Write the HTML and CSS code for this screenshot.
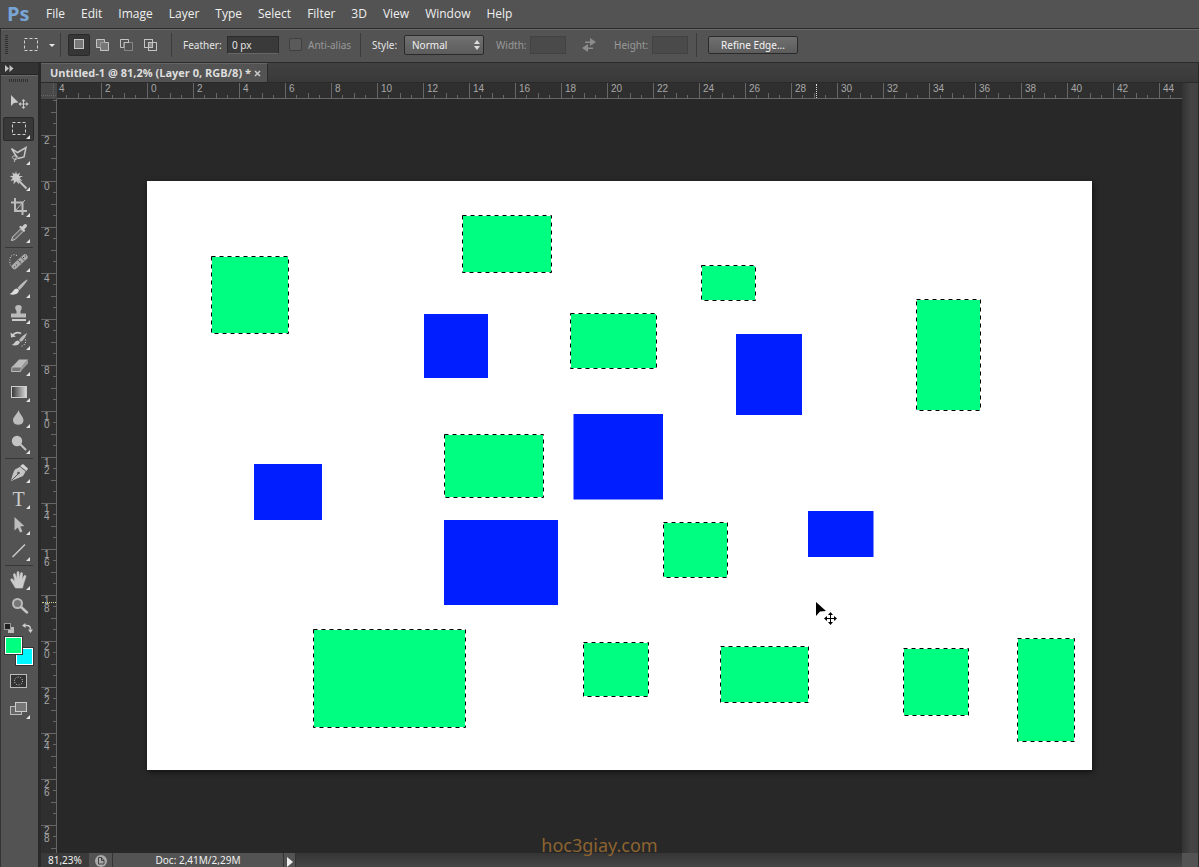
FILE: index.html
```html
<!DOCTYPE html>
<html lang="en">
<head>
<meta charset="utf-8">
<title>Untitled-1</title>
<link rel="stylesheet" href="styles.css">
</head>
<body class="app">
<header class="menubar">
  <span class="logo">Ps</span>
  <nav class="menus">
    <button>File</button><button>Edit</button><button>Image</button><button>Layer</button><button>Type</button><button>Select</button><button>Filter</button><button>3D</button><button>View</button><button>Window</button><button>Help</button>
  </nav>
</header>

<section class="options">
  <span class="opt-grip"></span>
  <button class="opt-tool" aria-label="Marquee presets">
    <svg width="32" height="16" viewBox="0 0 32 16"><rect x="1.500" y="1.500" width="13" height="12" fill="none" stroke="#d0d0d0" stroke-dasharray="3 2"/><path d="M26 7h6l-3 3z" fill="#e8e8e8"/></svg>
  </button>
  <div class="modes">
    <button class="mode mode-on" aria-label="New selection"><svg width="16" height="16" viewBox="0 0 16 16"><rect x="3.500" y="2.500" width="9" height="9" fill="#777" stroke="#c4c4c4"/></svg></button>
    <button class="mode" aria-label="Add to selection"><svg width="16" height="16" viewBox="0 0 16 16"><path d="M1.500 2.500h8v3h4v8h-8v-3h-4z" fill="#777" stroke="#c4c4c4"/><path d="M5.500 9.500v-4h4" fill="none" stroke="#999"/></svg></button>
    <button class="mode" aria-label="Subtract from selection"><svg width="16" height="16" viewBox="0 0 16 16"><rect x="5.500" y="5.500" width="8" height="8" fill="none" stroke="#858585"/><path d="M9.500 5V2.500h-8v8H5V5.500h5" fill="none" stroke="#c4c4c4"/></svg></button>
    <button class="mode" aria-label="Intersect with selection"><svg width="16" height="16" viewBox="0 0 16 16"><rect x="1.500" y="2.500" width="8" height="8" fill="none" stroke="#c4c4c4"/><rect x="5.500" y="5.500" width="8" height="8" fill="none" stroke="#c4c4c4"/><rect x="6" y="6" width="3" height="4" fill="#888"/></svg></button>
  </div>
  <div class="group group-feather"><label class="lab-feather" for="feather">Feather:</label><input class="field" id="feather" type="text" value="0 px"></div>
  <div class="group group-alias"><input class="tick" id="alias" type="checkbox" disabled><label class="dim" for="alias">Anti-alias</label></div>
  <div class="group group-style"><label class="lab-style" for="style">Style:</label>
    <span class="picker"><select id="style"><option>Normal</option></select><svg class="picker-arrows" width="6" height="10" viewBox="0 0 6 10"><path d="M3 0l3 4H0zM3 10l3-4H0z" fill="#ddd"/></svg></span></div>
  <div class="group group-size"><label class="dim lab-width" for="w">Width:</label><input class="field field-off" id="w" type="text" disabled></div>
  <button class="swap" aria-label="Swap width and height"><svg width="16" height="14" viewBox="0 0 16 14"><path d="M4 3.500h5V0l6 4-6 4V5H4zM12 9.500H7V6L1 10l6 4v-3h5z" fill="#8c8c8c"/></svg></button>
  <div class="group group-size"><label class="dim lab-height" for="h">Height:</label><input class="field field-off" id="h" type="text" disabled></div>
  <div class="group group-refine"><button class="refine">Refine Edge...</button></div>
</section>

<main class="workspace">
  <aside class="toolbar">
    <button class="tb-head" aria-label="Expand panel"><svg width="9" height="7" viewBox="0 0 9 7"><path d="M0 0l4 3.500L0 7zM4.500 0l4 3.500-4 3.500z" fill="#c4c4c4"/></svg></button>
    <div class="tb-body">
      <span class="tb-grip"></span>
      <button class="tool tool-plain" aria-label="Move"><svg viewBox="0 0 22 22"><path d="M3 3v11l3-3 4.500-.5z" fill="#ccc"/><path d="M15.500 8v8M11.500 12h8" stroke="#ccc"/><path d="M15.500 7l2 2.200h-4zM15.500 17l2-2.200h-4zM10.500 12l2.200-2v4zM20.500 12l-2.200-2v4z" fill="#ccc"/></svg></button>
      <button class="tool tool-on" aria-label="Rectangular marquee"><svg viewBox="0 0 22 22"><rect x="4.500" y="4.500" width="13" height="12" fill="none" stroke="#d0d0d0" stroke-dasharray="3 2"/></svg></button>
      <button class="tool" aria-label="Polygonal lasso"><svg viewBox="0 0 22 22"><path d="M8.500 12.500L3.500 4.500l6 4 8.500-5-2 9.500-6 1.500" fill="none" stroke="#c8c8c8" stroke-width="1.500"/><path d="M9 12c-5-1-6 2-3 3s5-1 3-3l-3 6" fill="none" stroke="#c8c8c8"/></svg></button>
      <button class="tool" aria-label="Magic wand"><svg viewBox="0 0 22 22"><path d="M8 1l1 3.500 3-2-1 3.500 4 0-3.500 2 3 3-3.800-.7.3 4-2.700-3-2.800 3 .3-4-3.500.5 2.500-2.800-3.200-2 3.700-.3-1.200-3.300 3 1.600z" fill="#ccc"/><path d="M10 10l8.500 8.500" stroke="#c4c4c4" stroke-width="2"/></svg></button>
      <button class="tool" aria-label="Crop"><svg viewBox="0 0 22 22"><path d="M7 2v13h12M3 6.500h11.500V19" fill="none" stroke="#bcbcbc" stroke-width="2"/><path d="M8 14L17 4" stroke="#bcbcbc"/></svg></button>
      <button class="tool" aria-label="Eyedropper"><svg viewBox="0 0 22 22"><path d="M3.500 18.500l1-3.500 8-8 2.500 2.500-8 8z" fill="#666" stroke="#ccc"/><path d="M11 5l1.500-1.200 1.500 1L16 2.500c2-1.500 4 .5 2.500 2.500l-2.200 2.200 1 1.500L16 10z" fill="#ccc"/></svg></button>
      <span class="tb-sep"></span>
      <button class="tool" aria-label="Spot healing brush"><svg viewBox="0 0 22 22"><path d="M9 4.500C4 2 1 6 2 12c.5 4 3 5 5 3" fill="none" stroke="#d8d8d8" stroke-dasharray="1 1.500"/><path d="M6.500 15.500L17 6" stroke="#aaa" stroke-width="5.500" stroke-linecap="round"/><path d="M9.500 8.500l4.500 5M13 6l4 4.500" stroke="#666"/><path d="M6 16h1M8 14h1M15 6.500h1M17 5h1M11.500 10.500h1" stroke="#444"/></svg></button>
      <button class="tool" aria-label="Brush"><svg viewBox="0 0 22 22"><path d="M19 2.500C15 5 11 9 9.500 11l2 2C14 10.500 18 6 19.500 3z" fill="#bbb"/><path d="M9 11.500c-4 0-3 4-7.500 5.500 4 1.500 9 .5 9.500-4z" fill="#ddd"/></svg></button>
      <button class="tool" aria-label="Clone stamp"><svg viewBox="0 0 22 22"><path d="M10.500 2c4.500 0 3.500 4 2 6v2.500H18v4H3v-4h5.500V8c-1.500-2-2.500-6 2-6z" fill="#bbb"/><path d="M4 17h14" stroke="#ccc" stroke-width="2"/></svg></button>
      <button class="tool" aria-label="History brush"><svg viewBox="0 0 22 22"><path d="M4 7c3-4 6-4 9-2.500" fill="none" stroke="#ccc" stroke-width="1.500"/><path d="M2.500 3.500L3 8.500l5-1z" fill="#ccc"/><path d="M19 4c-4 2-6.500 5-8 7l2 2c2.500-2 5-5 6-9z" fill="#bbb"/><path d="M10 11.500c-3 0-3 3-6.500 4.500 4 1 7.500.5 8.500-3z" fill="#ccc"/><path d="M17.500 10.500c1 4-2 6.500-5 7" fill="none" stroke="#ddd" stroke-dasharray="1 1.500"/></svg></button>
      <button class="tool" aria-label="Eraser"><svg viewBox="0 0 22 22"><path d="M4 12l7-7.500h9L13.500 12z" fill="#bbb"/><path d="M4 12h9.500l-1 4.500H3.500z" fill="#777" stroke="#bbb"/><path d="M13.500 12L20 4.500V8.500l-7.500 8z" fill="#999"/></svg></button>
      <button class="tool" aria-label="Gradient"><svg viewBox="0 0 22 22"><defs><linearGradient id="gr"><stop stop-color="#333"/><stop offset="1" stop-color="#ddd"/></linearGradient></defs><rect x="3.500" y="5.500" width="15" height="11" fill="url(#gr)" stroke="#ccc"/></svg></button>
      <button class="tool" aria-label="Blur"><svg viewBox="0 0 22 22"><path d="M10.500 3c1 4 5 6.500 5 10.500a5.300 5 0 0 1-10.500 0C5 9.500 9.500 7 10.500 3z" fill="#bdbdbd"/></svg></button>
      <button class="tool" aria-label="Dodge"><svg viewBox="0 0 22 22"><circle cx="9" cy="8" r="5.200" fill="#c4c4c4"/><path d="M12 11l5.500 5.500" stroke="#c4c4c4" stroke-width="2" stroke-linecap="round"/></svg></button>
      <span class="tb-sep"></span>
      <button class="tool" aria-label="Pen"><svg viewBox="0 0 22 22"><path d="M12.500 4.500l5.500 4.500-3 5-7 3-5 2c1-4 2-9 4-11.500z" fill="#c4c4c4"/><path d="M4 18l6-6" stroke="#555"/><circle cx="10.500" cy="11" r="1.300" fill="#555"/><path d="M12 4l3-2 5 4.500-1.500 2.500z" fill="#d4d4d4"/><path d="M12 4.500l6 5" stroke="#666"/></svg></button>
      <button class="tool tool-type" aria-label="Type">T</button>
      <button class="tool" aria-label="Path selection"><svg viewBox="0 0 22 22"><path d="M6.500 3v13.500l3.300-3 2.200 5 2.500-1-2.200-5 4-.5z" fill="#bdbdbd"/></svg></button>
      <button class="tool" aria-label="Line"><svg viewBox="0 0 22 22"><path d="M4.500 17L17 4.500" stroke="#ccc" stroke-width="1.500"/></svg></button>
      <span class="tb-sep"></span>
      <button class="tool" aria-label="Hand"><svg viewBox="0 0 22 22"><path d="M7.500 19L3 11.500c-1-2 1-2 2-1l2 2L5.500 6c0-1.800 1.500-1.800 2-.3L9 10V3.700c.2-1.700 1.900-1.700 2 0V10l1.500-5.500c.5-1.500 2.200-1.200 2 .5L14 11l2-4c.8-1.500 2.300-.6 1.800 1l-2.300 7-1 4z" fill="#ccc" stroke="#ccc" stroke-width=".6"/></svg></button>
      <button class="tool tool-plain" aria-label="Zoom"><svg viewBox="0 0 22 22"><circle cx="9.500" cy="8.500" r="4.500" fill="#777" stroke="#bbb" stroke-width="2"/><path d="M13 12l6 5.500" stroke="#c4c4c4" stroke-width="2.500" stroke-linecap="round"/></svg></button>
      <div class="mini-row">
        <button class="mini" aria-label="Default colors"><svg width="10" height="10" viewBox="0 0 10 10"><rect x="4" y="4" width="6" height="6" fill="#bbb"/><rect x=".5" y=".5" width="6" height="6" fill="#222" stroke="#999"/></svg></button>
        <button class="mini" aria-label="Swap colors"><svg width="11" height="10" viewBox="0 0 11 10"><path d="M2 2.500h3q3.500 0 3.500 4" fill="none" stroke="#ccc" stroke-width="1.500"/><path d="M0 2.500L3.500 0v5zM8.500 10L6 6.500h5z" fill="#ccc"/></svg></button>
      </div>
      <div class="swatches"><button class="swatch swatch-back" aria-label="Background color"></button><button class="swatch swatch-front" aria-label="Foreground color"></button></div>
      <button class="tool tool-plain" aria-label="Quick mask"><svg viewBox="0 0 22 22"><rect x="2.500" y="4.500" width="16" height="13" fill="#333" stroke="#bbb"/><circle cx="10.500" cy="11" r="4" fill="none" stroke="#ddd" stroke-dasharray="1 1.500"/></svg></button>
      <button class="tool tool-screen" aria-label="Screen mode"><svg viewBox="0 0 22 22"><rect x="2.500" y="8.500" width="11" height="8" fill="#666" stroke="#bbb"/><rect x="7.500" y="4.500" width="11" height="9" fill="#777" stroke="#ccc"/></svg></button>
    </div>
  </aside>

  <section class="doc">
    <div class="tabs"><div class="tab"><span>Untitled-1 @ 81,2% (Layer 0, RGB/8) *</span><button class="tab-x" aria-label="Close"><svg width="7" height="7" viewBox="0 0 7 7"><path d="M1 1l5 5M6 1L1 6" stroke="#ccc" stroke-width="1.500"/></svg></button></div></div>
    <div class="view">
      <div class="corner"></div>
      <div class="hruler"><span class="first">4</span><span>2</span><span>0</span><span>2</span><span>4</span><span>6</span><span>8</span><span>10</span><span>12</span><span>14</span><span>16</span><span>18</span><span>20</span><span>22</span><span>24</span><span>26</span><span>28</span><span>30</span><span>32</span><span>34</span><span>36</span><span>38</span><span>40</span><span>42</span><span class="last">44</span><i class="hmark"></i></div>
      <div class="vruler"><span class="first"></span><span>2</span><span>0</span><span>2</span><span>4</span><span>6</span><span>8</span><span>1<br>0</span><span>1<br>2</span><span>1<br>4</span><span>1<br>6</span><span>1<br>8</span><span>2<br>0</span><span>2<br>2</span><span>2<br>4</span><span>2<br>6</span><span>2<br>8</span><i class="vmark"></i></div>
      <div class="vscroll"></div>
      <div class="canvas">
        <svg class="artboard" width="945" height="589" viewBox="0 0 945 589">
          <g fill="#001eff">
            <rect x="277" y="133" width="64" height="64"/><rect x="589" y="153" width="66" height="81"/><rect x="426.500" y="233" width="89.500" height="85.500"/><rect x="107" y="283" width="68" height="56"/><rect x="297" y="339" width="114" height="85"/><rect x="661" y="330" width="65.500" height="46"/>
          </g>
          <defs><g id="sel">
            <rect x="64.500" y="75.500" width="77" height="77"/><rect x="315.500" y="34.500" width="89" height="57"/><rect x="554.500" y="84.500" width="54" height="35"/><rect x="423.500" y="132.500" width="86" height="55"/><rect x="769.500" y="118.500" width="64" height="111"/><rect x="297.500" y="253.500" width="99" height="63"/><rect x="516.500" y="341.500" width="64" height="55"/><rect x="166.500" y="448.500" width="152" height="98"/><rect x="436.500" y="461.500" width="65" height="54"/><rect x="573.500" y="465.500" width="88" height="56"/><rect x="756.500" y="467.500" width="65" height="67"/><rect x="870.500" y="457.500" width="57" height="103"/>
          </g></defs>
          <use href="#sel" fill="#00ff80" stroke="#fff"/>
          <use href="#sel" fill="none" stroke="#000" stroke-dasharray="4 4"/>
          <path d="M669 421v14l4-4.500 6-.5z" fill="#000"/>
          <path d="M683.500 432v11M678 437.500h11" stroke="#000"/>
          <path d="M683.500 431l2.500 3h-5zM683.500 444l2.500-3h-5zM677 437.500l3-2.500v5zM690 437.500l-3-2.500v5z" fill="#000"/>
        </svg>
      </div>
    </div>
    <footer class="status">
      <label class="hidden" for="zoomlevel">Zoom</label><input class="zoomlevel" id="zoomlevel" type="text" value="81,23%">
      <button class="status-icon" aria-label="Document status"><svg width="12" height="12" viewBox="0 0 12 12"><circle cx="6" cy="6" r="6" fill="#aaa"/><path d="M3.500 2.500h3l2.500 3V9H3.500zM6.500 2.500v3H9" fill="none" stroke="#444"/></svg></button>
      <span class="docsize">Doc: 2,41M/2,29M</span>
      <button class="status-more" aria-label="Status options"><svg width="6" height="10" viewBox="0 0 6 10"><path d="M0 0l6 5-6 5z" fill="#eee"/></svg></button>
      <span class="hscroll"></span><span class="size-grip"></span>
    </footer>
  </section>
</main>
<div class="watermark">hoc3giay.com</div>
</body>
</html>
```
FILE: styles.css
```css
* { box-sizing: border-box; }
button, input, select { font: inherit; color: inherit; margin: 0; padding: 0; border: 0; background: none; border-radius: 0; }
svg { display: block; }

.app {
  position: relative;
  display: flex;
  flex-direction: column;
  height: 100vh;
  margin: 0;
  overflow: hidden;
  background: #535353;
  color: #e4e4e4;
  font-family: "Noto Sans", "Open Sans", sans-serif;
  font-size: 10px;
}

/* Menu bar */
.menubar { display: flex; align-items: center; height: 28px; flex: none; }
.logo { width: 38px; padding-left: 7px; font: bold 20px/26px "Open Sans", sans-serif; color: #79a5d6; }
.menus { display: flex; font: 12px/28px "Open Sans", sans-serif; color: #f0f0f0; }
.menus button { padding: 0 8px; }

/* Options bar */
.options { display: flex; align-items: center; height: 35px; padding-bottom: 2px; flex: none; border-top: 1px solid #2a2a2a; border-bottom: 1px solid #2a2a2a; border-left: 1px solid #333; box-shadow: inset 0 1px #696969; }
.opt-grip { width: 3px; height: 20px; margin: 0 15px 0 4px; background: repeating-linear-gradient(#2f2f2f 0 1px, #535353 1px 2px); }
.opt-tool { width: 38px; height: 24px; border-right: 1px solid #3c3c3c; }
.modes { display: flex; gap: 2px; width: 111px; height: 24px; padding-left: 7px; border-right: 1px solid #3c3c3c; }
.mode { display: grid; place-items: center; width: 22px; height: 22px; margin-top: 1px; }
.mode-on { background: #363636; border: 1px solid #2a2a2a; border-radius: 2px; }
.group { display: flex; align-items: center; height: 24px; }
.group-feather { width: 117px; padding-left: 11px; }
.lab-feather { width: 44px; }
.field { width: 52px; height: 18px; padding: 0 4px; background: #3a3a3a; border: 1px solid #2c2c2c; border-bottom-color: #666; }
.field-off { width: 36px; background: #4a4a4a; border-color: #424242; }
.group-alias { width: 72px; gap: 6px; border-right: 1px solid #3c3c3c; }
.tick { appearance: none; width: 13px; height: 13px; border: 1px solid #404040; border-radius: 2px; background: #5a5a5a; }
.dim { color: #999; }
.group-style { width: 135px; padding-left: 11px; }
.lab-style { width: 32px; }
.picker { position: relative; width: 80px; }
.picker select { appearance: none; width: 100%; height: 20px; padding: 0 7px; border: 1px solid #2a2a2a; border-radius: 2px; background: linear-gradient(#717171, #5c5c5c); color: #f0f0f0; display: block; }
.picker-arrows { position: absolute; right: 4px; top: 5px; pointer-events: none; }
.lab-width { width: 34px; }
.swap { margin: 0 17px 0 15px; }
.lab-height { width: 38px; }
.group-refine { margin-left: 8px; padding-left: 11px; border-left: 1px solid #3c3c3c; }
.refine { width: 90px; height: 18px; border: 1px solid #2a2a2a; border-radius: 2px; background: linear-gradient(#707070, #5c5c5c); color: #f4f4f4; line-height: 14px; }

/* Tool panel */
.workspace { display: flex; flex: 1; min-height: 0; }
.toolbar { display: flex; flex-direction: column; width: 41px; flex: none; border-left: 1px solid #333; border-right: 3px solid #292929; }
.tb-head { height: 12px; padding-left: 4px; background: #333; border-bottom: 1px solid #272727; }
.tb-body { display: flex; flex-direction: column; align-items: center; flex: 1; padding-right: 2px; background: #535353; border-top: 1px solid #666; }
.tb-grip { width: 20px; height: 3px; margin: 3px 0 8px; background: repeating-linear-gradient(90deg, #303030 0 1px, #535353 1px 2px); flex: none; }
.tool { position: relative; width: 31px; height: 26px; flex: none; display: grid; place-items: center; }
.tool svg { width: 22px; height: 22px; }
.tool::after { content: ""; position: absolute; right: 4px; bottom: 3px; border: 2px solid #e4e4e4; border-top-color: transparent; border-left-color: transparent; }
.tool-plain::after { display: none; }
.tool-on { background: #383838; border: 1px solid #292929; border-radius: 2px; height: 24px; margin: 1px 0; }
.tool-on::after { right: 3px; bottom: 1px; }
.tool-type { font: 20px/24px "Liberation Serif", serif; color: #ccc; }
.tb-sep { width: 28px; height: 1px; margin: 1px 0; background: #383838; flex: none; }
.mini-row { display: flex; justify-content: space-between; align-items: center; width: 29px; height: 17px; flex: none; }
.swatches { display: grid; width: 30px; height: 30px; margin-bottom: 2px; flex: none; }
.swatch { grid-area: 1 / 1; width: 19px; height: 19px; border: 1px solid #333; box-shadow: inset 0 0 0 1px #fff; }
.swatch-front { background: #00ff80; }
.swatch-back { background: #00f6ff; place-self: end; }
.tool-screen { margin-top: 2px; }

/* Document window */
.doc { display: flex; flex-direction: column; flex: 1; min-width: 0; border-right: 1px solid #292929; }
.tabs { display: flex; height: 20px; flex: none; background: linear-gradient(#414141, #393939); border-bottom: 1px solid #2a2a2a; }
.tab { display: flex; align-items: center; gap: 3px; padding: 0 6px 0 9px; background: #535353; border-top: 1px solid #666; border-right: 1px solid #2a2a2a; font: bold 11px/18px "Open Sans", sans-serif; color: #dedede; }
.view { display: grid; grid-template: 16px 1fr / 16px 1fr 16px; flex: 1; min-height: 0; }
.corner {
  background:
    repeating-linear-gradient(90deg, #666 0 1px, transparent 1px 2px) 0 12px / 100% 1px no-repeat,
    repeating-linear-gradient(#666 0 1px, transparent 1px 2px) 12px 0 / 1px 100% no-repeat,
    #484848;
}
.hruler, .vruler { position: relative; display: flex; background-color: #2f2f2f; color: #a8a8a8; font: 10px/12px "Liberation Sans", sans-serif; }
.hruler {
  min-width: 0;
  border-bottom: 1px solid #666;
  background-repeat: repeat-x;
  background-image:
    linear-gradient(90deg, #666 1px, transparent 1px),
    linear-gradient(90deg, #666 1px, transparent 1px),
    linear-gradient(90deg, #666 1px, transparent 1px),
    linear-gradient(90deg, #666 1px, transparent 1px);
  background-size: 46px 15px, 46px 3px, 46px 5px, 46px 3px;
  background-position: 44px 0, 9px 100%, 21px 100%, 32px 100%;
}
.hruler span { width: 46px; padding-left: 4px; flex: none; }
.hruler .first { width: 44px; padding-left: 2px; }
.hruler .last { width: 20px; }
.vruler {
  flex-direction: column;
  grid-column: 1;
  min-height: 0;
  border-right: 1px solid #666;
  background-repeat: repeat-y;
  background-image:
    linear-gradient(#666 1px, transparent 1px),
    linear-gradient(#666 1px, transparent 1px),
    linear-gradient(#666 1px, transparent 1px),
    linear-gradient(#666 1px, transparent 1px);
  background-size: 15px 46px, 3px 46px, 5px 46px, 3px 46px;
  background-position: 0 36px, 100% 1px, 100% 13px, 100% 24px;
}
.vruler span { height: 46px; padding: 2px 0 0 3px; line-height: 8px; flex: none; }
.vruler .first { height: 36px; }
.vruler span:nth-last-child(2) { height: 20px; }
.hmark { position: absolute; left: 759px; top: 1px; height: 14px; border-left: 1px dotted #ddd; }
.vmark { position: absolute; top: 503px; left: 1px; width: 14px; border-top: 1px dotted #d8d890; }
.vscroll { grid-column: 3; grid-row: 1 / 3; background: linear-gradient(90deg, #333, #454545 60%, #414141); }
.canvas { grid-column: 2; grid-row: 2; display: grid; place-items: center; padding-bottom: 2px; overflow: hidden; background: #282828; }
.artboard { background: #fff; box-shadow: 1px 2px 5px #111; }

/* Status bar */
.status { display: flex; height: 14px; flex: none; overflow: hidden; background: #535353; color: #f0f0f0; line-height: 14px; }
.hidden { position: absolute; width: 1px; height: 1px; overflow: hidden; clip-path: inset(50%); }
.zoomlevel { width: 48px; padding-left: 7px; background: #3a3a3a; }
.status-icon { width: 24px; padding: 2px 0 0 6px; border-right: 1px solid #333; }
.docsize { width: 171px; text-align: center; border-right: 1px solid #333; }
.status-more { width: 12px; padding: 4px 0 0 3px; border-right: 1px solid #333; }
.hscroll { flex: 1; background: linear-gradient(#353535, #454545); }
.size-grip { width: 16px; background: #535353; }

.watermark { position: absolute; bottom: 9px; left: 0; right: 0; text-align: center; font: 18px/26px "Noto Sans", sans-serif; color: #8d6430; pointer-events: none; }
```
